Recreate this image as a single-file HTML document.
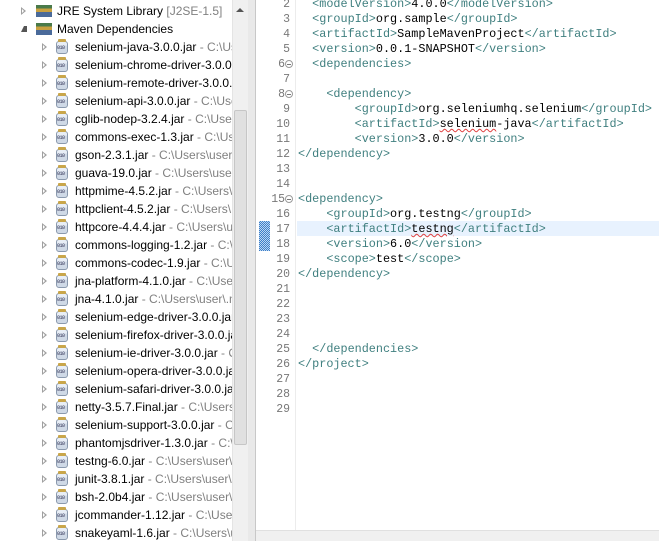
<!DOCTYPE html>
<html><head><meta charset="utf-8"><style>
*{margin:0;padding:0;box-sizing:border-box}
body{width:659px;height:541px;overflow:hidden;background:#fff;position:relative;font-family:"Liberation Sans",sans-serif}
#left{position:absolute;left:0;top:0;width:232px;height:541px;overflow:hidden;background:#fff}
.row{position:absolute;height:18px;line-height:18px;font-size:12px;white-space:nowrap;color:#000}
.row .g{color:#808080}
.arr{position:absolute;width:0;height:0;border-top:4px solid transparent;border-bottom:4px solid transparent;border-left:5px solid #a0a0a0}
.arr::after{content:"";position:absolute;left:-4px;top:-2px;border-top:2px solid transparent;border-bottom:2px solid transparent;border-left:2.5px solid #fff}
.jar{position:absolute;width:12px;height:13px;border:1px solid #8a99ad;border-radius:3px;background:linear-gradient(#e8eef6 0 30%,#cfd9e6 30%)}
.jar::before{content:"";position:absolute;left:1px;top:-3px;width:8px;height:3px;background:#c9a64a;border-radius:1px}
.jar::after{content:"010";position:absolute;left:0;top:4px;font-size:5px;line-height:5px;color:#335;font-family:"Liberation Mono",monospace;letter-spacing:-0.5px}
.lib{position:absolute;width:16px;height:12px}
#sb{position:absolute;left:232px;top:0;width:16px;height:541px;background:#f0f0f0;border-left:1px solid #e4e4e4}
#thumb{position:absolute;left:234px;top:110px;width:13px;height:335px;background:#e0e0e0;border:1px solid #c6c6c6;border-radius:2px}
#div{position:absolute;left:248px;top:0;width:8px;height:541px;background:#e9e9e9;border-right:1px solid #c8c8c8}
#ed{position:absolute;left:256px;top:0;width:403px;height:541px;background:#fff}
#gut{position:absolute;left:295px;top:0;width:1px;height:530px;background:#ececec}
.ln{position:absolute;left:256px;width:34px;text-align:right;font-family:"Liberation Mono",monospace;font-size:11.5px;color:#787878;height:15px;line-height:15px}
.cl{position:absolute;left:298px;font-family:"Liberation Mono",monospace;font-size:11.8px;white-space:pre;height:15px;line-height:15px;color:#000}
.t{color:#3f7f7f}
.fold{position:absolute;left:285px;width:8px;height:8px;border:1px solid #9a9a9a;border-radius:50%;background:#fff}
.fold::after{content:"";position:absolute;left:1px;top:2.5px;width:4px;height:1px;background:#777}
#hl{position:absolute;left:297px;top:221px;width:362px;height:15px;background:#e8f2fe}
#mk{position:absolute;left:259px;top:221px;width:11px;height:30px;background:repeating-conic-gradient(#3d7fc8 0 25%,#bcd6f2 0 50%) 0 0/2px 2px}
#hs{position:absolute;left:256px;top:530px;width:403px;height:11px;background:#f0f0f0;border-top:1px solid #e0e0e0}
.sq{text-decoration:underline wavy #e04040;text-decoration-thickness:1px}
</style></head><body>
<div id="left">
<div class="arr" style="left:21px;top:7px"></div>
<div class="lib" style="left:36px;top:5px;background:linear-gradient(#4a7a4a 0 30%,#c8a040 30% 60%,#4a6a9a 60%)"></div>
<div class="row" style="left:57px;top:2px">JRE System Library <span class="g">[J2SE-1.5]</span></div>
<div style="position:absolute;left:21px;top:26px;width:0;height:0;border-left:3px solid transparent;border-right:3px solid #555;border-bottom:6px solid #555"></div>
<div class="lib" style="left:36px;top:23px;background:linear-gradient(#4a7a4a 0 30%,#c8a040 30% 60%,#4a6a9a 60%)"></div>
<div class="row" style="left:57px;top:20px">Maven Dependencies</div>
<div id="rows"></div>
</div>
<div id="sb"></div><div id="thumb"></div>
<div style="position:absolute;left:236px;top:8px;border-left:4px solid transparent;border-right:4px solid transparent;border-bottom:4px solid #555"></div>
<div id="div"></div>
<div id="ed"></div>
<div id="hl"></div>
<div id="gut"></div>
<div id="mk"></div>
<div id="code"></div>
<div id="hs"></div>
<script>
var items=[["selenium-java-3.0.0.jar"," - C:\\Users\\user"],["selenium-chrome-driver-3.0.0.jar",""],["selenium-remote-driver-3.0.0.jar",""],["selenium-api-3.0.0.jar"," - C:\\Users\\user"],["cglib-nodep-3.2.4.jar"," - C:\\Users\\user"],["commons-exec-1.3.jar"," - C:\\Users\\user"],["gson-2.3.1.jar"," - C:\\Users\\user\\.m2"],["guava-19.0.jar"," - C:\\Users\\user\\.m2"],["httpmime-4.5.2.jar"," - C:\\Users\\user"],["httpclient-4.5.2.jar"," - C:\\Users\\"],["httpcore-4.4.4.jar"," - C:\\Users\\user"],["commons-logging-1.2.jar"," - C:\\Users"],["commons-codec-1.9.jar"," - C:\\Users\\"],["jna-platform-4.1.0.jar"," - C:\\Users\\"],["jna-4.1.0.jar"," - C:\\Users\\user\\.m2"],["selenium-edge-driver-3.0.0.jar",""],["selenium-firefox-driver-3.0.0.jar",""],["selenium-ie-driver-3.0.0.jar"," - C:\\"],["selenium-opera-driver-3.0.0.jar",""],["selenium-safari-driver-3.0.0.jar",""],["netty-3.5.7.Final.jar"," - C:\\Users\\"],["selenium-support-3.0.0.jar"," - C:\\"],["phantomjsdriver-1.3.0.jar"," - C:\\"],["testng-6.0.jar"," - C:\\Users\\user\\"],["junit-3.8.1.jar"," - C:\\Users\\user\\"],["bsh-2.0b4.jar"," - C:\\Users\\user\\."],["jcommander-1.12.jar"," - C:\\Users"],["snakeyaml-1.6.jar"," - C:\\Users\\u"]];
var h="";items.forEach(function(it,i){var y=38+i*18;h+='<div class="arr" style="left:42px;top:'+(y+5)+'px"></div><div class="jar" style="left:56px;top:'+(y+3)+'px"></div><div class="row" style="left:75px;top:'+y+'px">'+it[0]+'<span class="g">'+it[1]+'</span></div>';});
document.getElementById("rows").innerHTML=h;
function T(s){return '<span class="t">'+s+'</span>';}
var L={2:"  "+T("&lt;modelVersion&gt;")+"4.0.0"+T("&lt;/modelVersion&gt;"),3:"  "+T("&lt;groupId&gt;")+"org.sample"+T("&lt;/groupId&gt;"),4:"  "+T("&lt;artifactId&gt;")+"SampleMavenProject"+T("&lt;/artifactId&gt;"),5:"  "+T("&lt;version&gt;")+"0.0.1-SNAPSHOT"+T("&lt;/version&gt;"),6:"  "+T("&lt;dependencies&gt;"),8:"    "+T("&lt;dependency&gt;"),9:"        "+T("&lt;groupId&gt;")+"org.seleniumhq.selenium"+T("&lt;/groupId&gt;"),10:"        "+T("&lt;artifactId&gt;")+'<span class="sq">selenium</span>-java'+T("&lt;/artifactId&gt;"),11:"        "+T("&lt;version&gt;")+"3.0.0"+T("&lt;/version&gt;"),12:T("&lt;/dependency&gt;"),15:T("&lt;dependency&gt;"),16:"    "+T("&lt;groupId&gt;")+"org.testng"+T("&lt;/groupId&gt;"),17:"    "+T("&lt;artifactId&gt;")+'<span class="sq">testng</span>'+T("&lt;/artifactId&gt;"),18:"    "+T("&lt;version&gt;")+"6.0"+T("&lt;/version&gt;"),19:"    "+T("&lt;scope&gt;")+"test"+T("&lt;/scope&gt;"),20:T("&lt;/dependency&gt;"),25:"  "+T("&lt;/dependencies&gt;"),26:T("&lt;/project&gt;")};
var c="";for(var n=2;n<=29;n++){var y=-3+(n-2)*15;var fold=(n==6||n==8||n==15);c+='<div class="ln" style="top:'+y+'px;'+(fold?'width:29px':'')+'">'+n+'</div>';if(fold)c+='<div class="fold" style="top:'+(y+3)+'px"></div>';if(L[n])c+='<div class="cl" style="top:'+y+'px">'+L[n]+'</div>';}
document.getElementById("code").innerHTML=c;
</script>
</body></html>
